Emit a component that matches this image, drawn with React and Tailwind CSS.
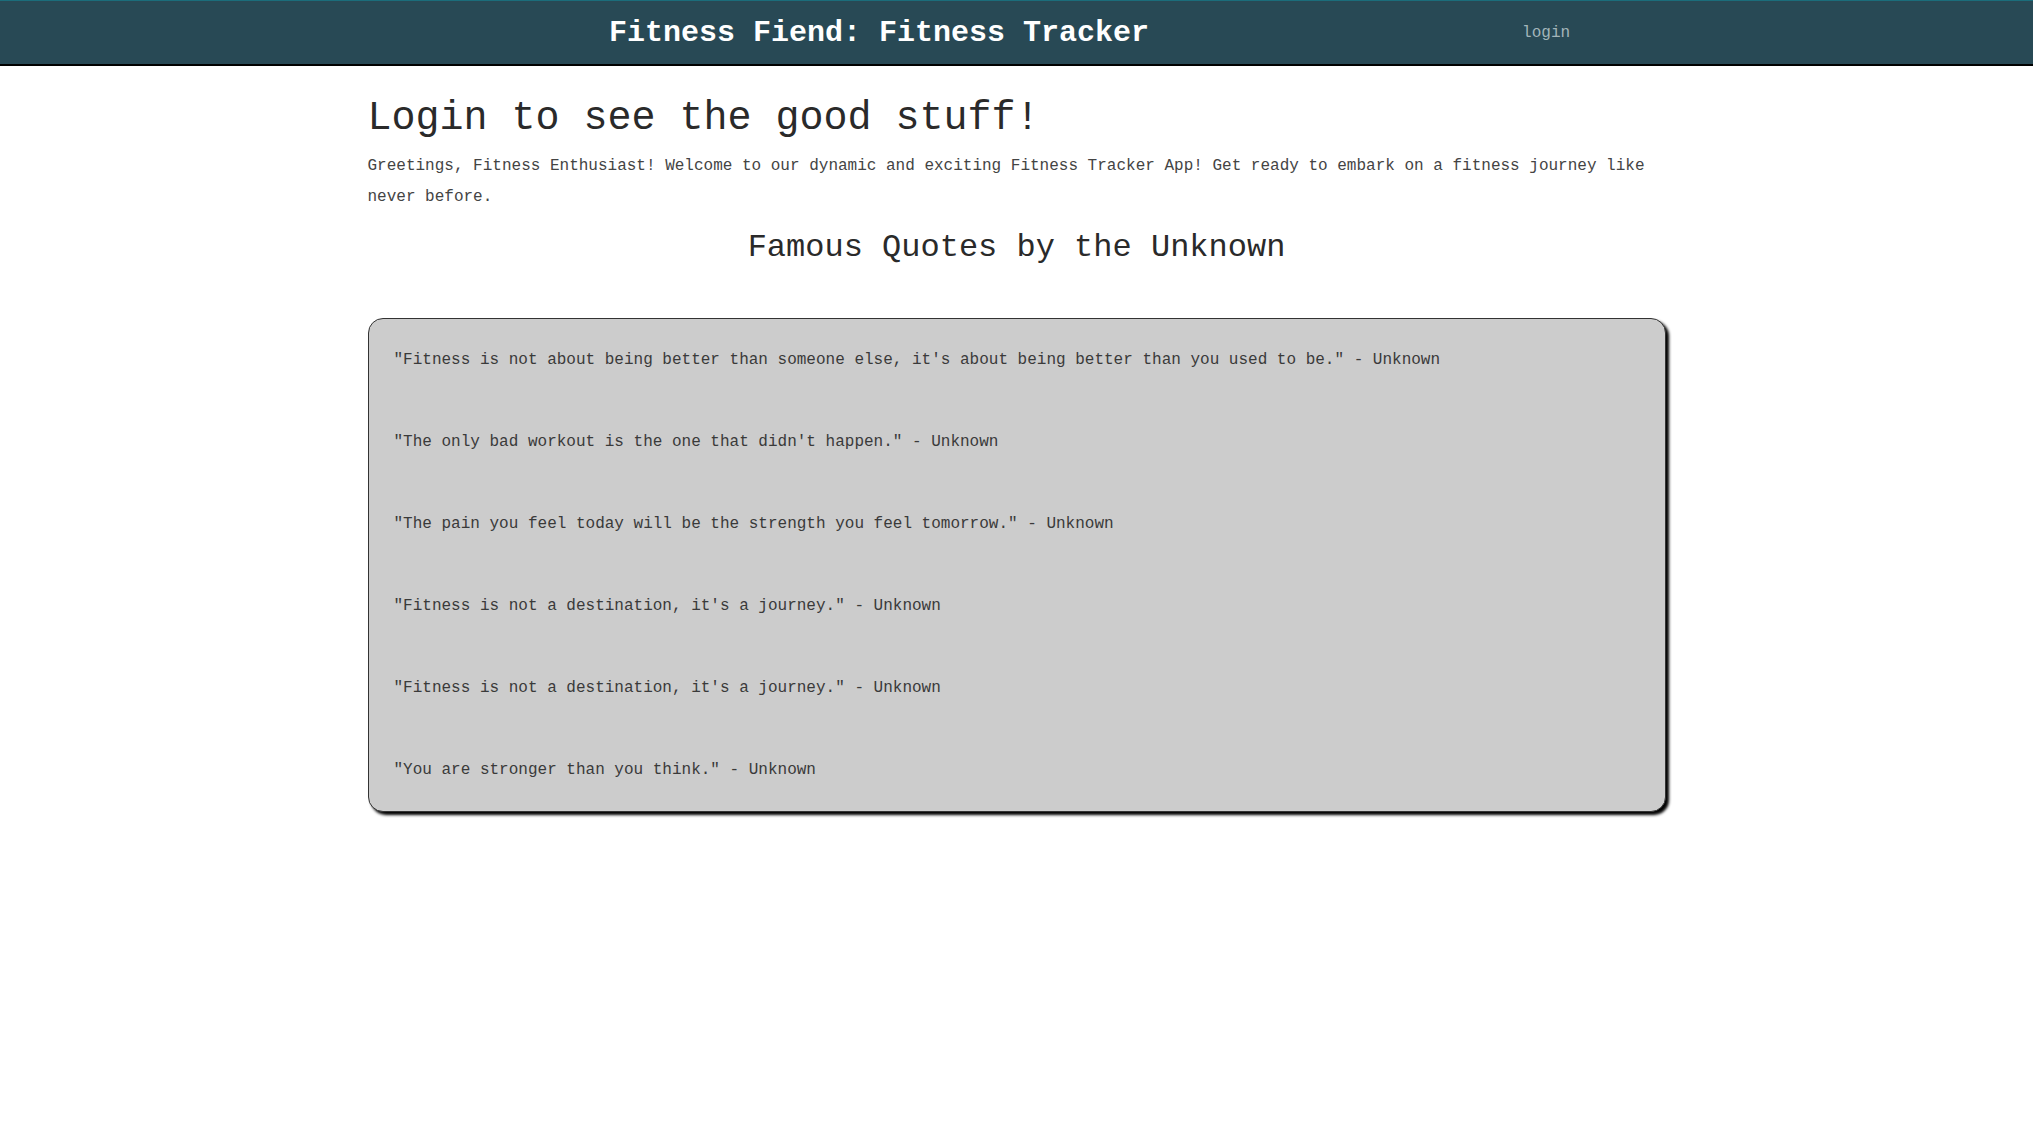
import React from 'react';

const quotes = [
  '"Fitness is not about being better than someone else, it\'s about being better than you used to be." - Unknown',
  '"The only bad workout is the one that didn\'t happen." - Unknown',
  '"The pain you feel today will be the strength you feel tomorrow." - Unknown',
  '"Fitness is not a destination, it\'s a journey." - Unknown',
  '"Fitness is not a destination, it\'s a journey." - Unknown',
  '"You are stronger than you think." - Unknown',
];

function Header() {
  return (
    <header className="h-[66px] bg-[#284955] border-t border-[#1b6d7b] border-b-2 border-b-black flex items-center">
      <h1 className="ml-[609px] text-[30px] leading-none font-bold text-white">
        Fitness Fiend: Fitness Tracker
      </h1>
      <a href="#" className="ml-[373px] text-[16px] text-[#a3b5ba]">login</a>
    </header>
  );
}

export default function App() {
  return (
    <div className="min-h-screen bg-white font-['Liberation_Mono','Courier_New',monospace]">
      <Header />
      <main className="w-[1298px] mx-auto pt-[29px]">
        <h2 className="text-[40px] leading-[48px] text-[#2a2a2a]">Login to see the good stuff!</h2>
        <p className="mt-[8px] text-[16px] leading-[31px] text-[#444]">
          Greetings, Fitness Enthusiast! Welcome to our dynamic and exciting Fitness Tracker App! Get ready to embark on a fitness journey like never before.
        </p>
        <h3 className="mt-[15px] text-[32px] leading-[40px] text-center text-[#2a2a2a]">Famous Quotes by the Unknown</h3>
        <div className="mt-[50px] bg-[#cccccc] border border-[#333] rounded-[15px] shadow-[3px_3px_3px_#000] px-[25px] pt-[29px] pb-[29px] flex flex-col gap-[58px]">
          {quotes.map((q, i) => (
            <p key={i} className="text-[16px] leading-[24px] text-[#3a3a3a]">{q}</p>
          ))}
        </div>
      </main>
    </div>
  );
}
